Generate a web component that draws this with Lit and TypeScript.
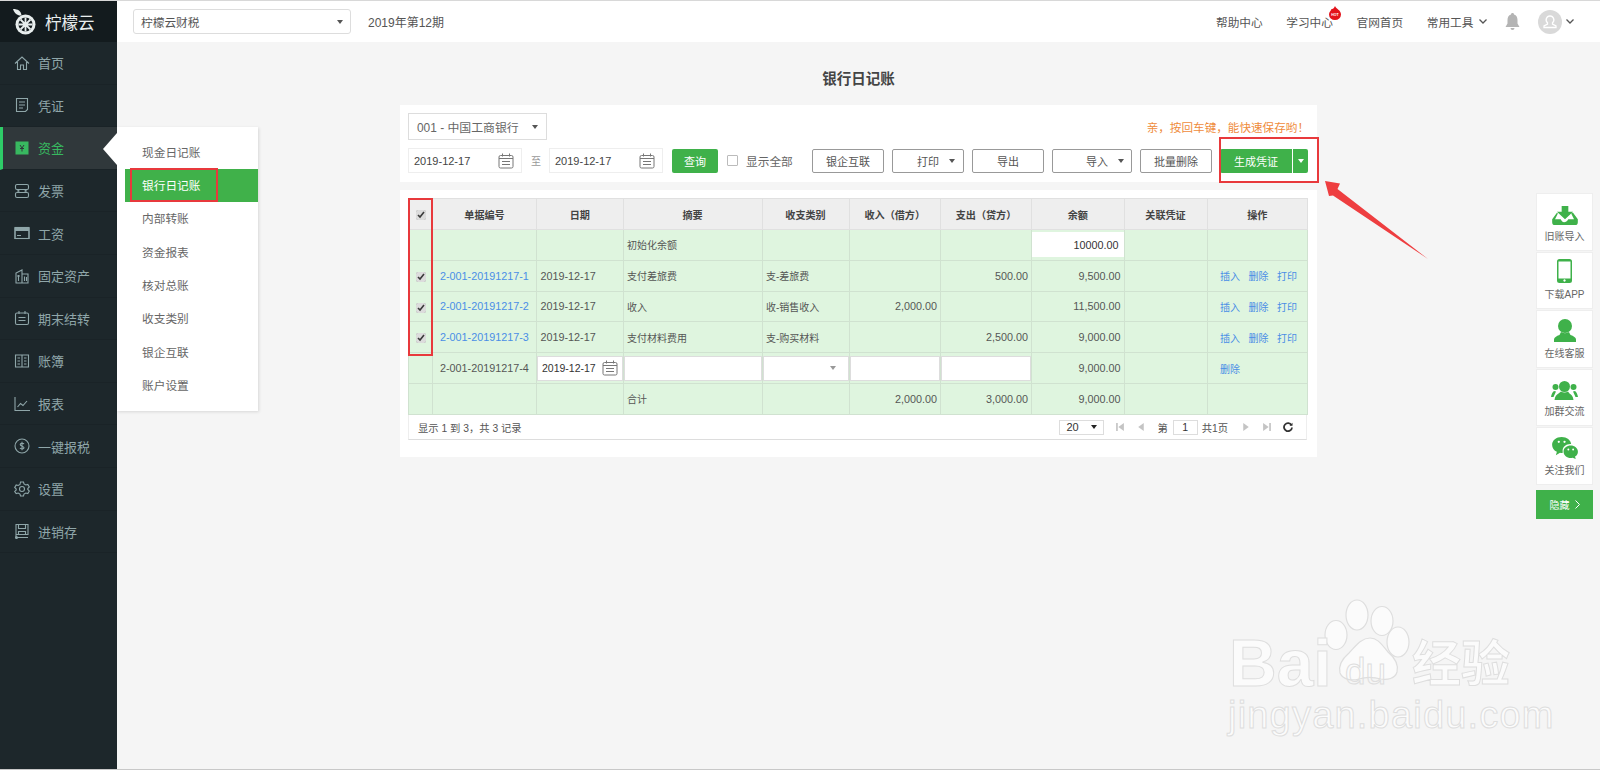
import { LitElement, html, css, svg } from "lit";
import { customElement } from "lit/decorators.js";

const FONT = css`"Liberation Sans", "Noto Sans CJK SC", sans-serif`;

const navIcons: Record<string, unknown> = {
  home: svg`<path d="M1 8.500 8 2l7 6.500M3.500 7v7.500h3V10h3v4.500h3V7"/>`,
  doc: svg`<path d="M2.500 1.500h11v11l-2 2h-9zM5 5h6M5 8h6M5 11h4"/>`,
  money: svg`<rect x="1.500" y="1.500" width="13" height="13" fill="currentColor" stroke="none"/><path d="M6 5l2 3 2-3M8 8v3.500M6 8.500h4" stroke="#30383b" stroke-width="1"/>`,
  invoice: svg`<path d="M3 1.500h10a1.500 1.500 0 0 1 1.500 1.500v2a1.500 1.500 0 0 1-1.500 1.500H3M3 1.500A1.500 1.500 0 0 0 1.500 3v2A1.500 1.500 0 0 0 3 6.500M3 9.500h10a1.500 1.500 0 0 1 1.500 1.500v2a1.500 1.500 0 0 1-1.500 1.500H3A1.500 1.500 0 0 1 1.500 13v-2A1.500 1.500 0 0 1 3 9.500zM3 6.500 5 8 3 9.500M13 6.500 11 8l2 1.500"/>`,
  card: svg`<rect x="1" y="2.500" width="14" height="11" fill="none"/><path d="M.5 2.500h15v3.500H.5z" fill="currentColor" stroke="none"/><path d="M1 6v7.500h14V6M3 10.500h4"/>`,
  asset: svg`<path d="M2 15V5l6-3v13M8 6h6v9H1.500M4.500 7v6M10.500 8.500v4.500M6 8H3M12.500 9v4"/>`,
  period: svg`<rect x="1.500" y="3" width="13" height="11.500" rx="1.500"/><path d="M5 1v3M11 1v3M4.500 7.500h7M4.500 10.500h7"/>`,
  book: svg`<path d="M1.500 2h13v12h-13zM8 2v12M3.500 5H6M3.500 8H6M3.500 11H6M10 5h2.500M10 8h2.500M10 11h2.500"/>`,
  chart: svg`<path d="M1 1v13.500h15M3.500 11l3-3.500 2.500 2 4-4.500"/>`,
  tax: svg`<circle cx="8" cy="8" r="7"/><path d="M10 6c-.5-1-3.800-1.300-3.800.5S10 8 10 9.700c0 1.600-3.400 1.400-4 .3M8 3.800v8.400"/>`,
  gear: svg`<circle cx="8" cy="8" r="2.500"/><path d="M6.500 1h3l.5 2 1.800 1 2-.6 1.500 2.600-1.500 1.500v1l1.500 1.500-1.500 2.600-2-.6-1.800 1-.5 2h-3l-.5-2-1.800-1-2 .6L.7 10.500 2.200 9V8L.7 6.500 2.200 3.900l2 .6L6 3.500z"/>`,
  stock: svg`<path d="M2 1.500h12v10H2zM4.500 1.500v4h7v-4M4.500 11.500v-3h7v3M2 1v13.500h12"/><circle cx="2.500" cy="14.500" r="1"/>`,
};

const NAV = [
  ["home", "首页"], ["doc", "凭证"], ["money", "资金"], ["invoice", "发票"], ["card", "工资"], ["asset", "固定资产"],
  ["period", "期末结转"], ["book", "账簿"], ["chart", "报表"], ["tax", "一键报税"], ["gear", "设置"], ["stock", "进销存"],
];
const SUB = ["现金日记账", "银行日记账", "内部转账", "资金报表", "核对总账", "收支类别", "银企互联", "账户设置"];
const COLS = [24, 104, 86.5, 139, 87, 91.5, 91, 92.5, 83, 100.5];
const HEAD = ["单据编号", "日期", "摘要", "收支类别", "收入（借方）", "支出（贷方）", "余额", "关联凭证", "操作"];

const calendar = html`<svg class="cal" viewBox="0 0 16 16"><rect x="1" y="2.500" width="14" height="12.500" rx="1.500"/><path d="M4.500 .5v3M11.500 .5v3M1 5.500h14M4 8.500h8M4 11.500h8"/></svg>`;

@customElement("app-root")
export class AppRoot extends LitElement {
  static styles = css`
    :host {
      display: flex;
      position: relative;
      width: 1600px;
      height: 770px;
      overflow: hidden;
      background: #f5f5f5;
      font-family: ${FONT};
      color: #555;
      box-sizing: border-box;
      border-top: 1px solid #d8d8d8;
      border-bottom: 1px solid #c8c8c8;
    }
    * { box-sizing: border-box; }
    svg { display: block; flex: none; }

    .side { width: 117px; flex: none; background: #1d272b; }
    .logo { height: 41px; background: #131b1e; display: flex; align-items: center; padding-left: 13px; gap: 9px; color: #e8eeee; font-size: 16.500px; }
    .nav { height: 42.600px; display: flex; align-items: center; padding-left: 14px; gap: 8px; font-size: 13px; color: #8fa6a9; border-bottom: 1px solid #1a2327; }
    .nav svg { width: 16px; height: 16px; fill: none; stroke: currentColor; stroke-width: 1.100; }
    .nav.on { background: #30383b; color: #38b860; border-left: 3px solid #2ecc68; padding-left: 11px; }

    .main { flex: 1; min-width: 0; }
    .top { height: 41px; background: #fff; display: flex; align-items: center; padding-left: 16px; font-size: 11.700px; color: #555; }
    .co { width: 218px; height: 25px; border: 1px solid #ddd; border-radius: 3px; display: flex; align-items: center; justify-content: space-between; padding: 0 7px; }
    .caret { width: 0; height: 0; border: 3.500px solid transparent; border-top: 4px solid #555; border-bottom: 0; flex: none; }
    .period { margin-left: 17px; font-size: 12px; }
    .links { margin-left: auto; display: flex; align-items: center; gap: 23.500px; padding-right: 26px; }
    .links span { position: relative; }
    .links .tool { display: flex; align-items: center; gap: 5px; }
    .chev { width: 8px; height: 5px; fill: none; stroke: #555; stroke-width: 1.300; }
    .hot { position: absolute; right: -8px; top: -7px; width: 12px; height: 14px; }
    .hot text { font: bold 3.500px ${FONT}; fill: #fff; text-anchor: middle; }
    .bell { width: 15px; height: 17px; fill: #b4b4b4; margin-left: -5.500px; }
    .user { display: flex; align-items: center; gap: 4px; margin-left: -5px; }
    .avatar { width: 24px; height: 24px; }

    h1 { margin: 0; padding-top: 11px; height: 63px; line-height: 52px; text-align: center; font-size: 14.500px; color: #444; margin-left: 283px; width: 917px; }
    .card { margin-left: 283px; width: 917px; background: #fff; padding: 8px; }
    .bar { height: 76.500px; margin-bottom: 8.500px; display: flex; flex-direction: column; gap: 8px; }
    .row1 { height: 27px; display: flex; align-items: center; justify-content: space-between; }
    .bank { width: 139px; height: 27px; border: 1px solid #ddd; display: flex; align-items: center; justify-content: space-between; padding: 0 8px; font-size: 11.900px; color: #666; }
    .hint { color: #ef8c3c; font-size: 11.600px; }
    .row2 { height: 25px; display: flex; align-items: center; gap: 8px; font-size: 11px; }
    .date { width: 114px; height: 25px; border: 1px solid #eee; display: flex; align-items: center; justify-content: space-between; padding: 0 7px 0 5px; color: #444; }
    .cal { width: 16px; height: 16px; fill: none; stroke: #777; stroke-width: 1; }
    .to { width: 10px; margin: 0 0 0 1px; color: #999; font-size: 10px; }
    .btn { height: 24px; width: 72px; border: 1px solid #999; border-radius: 2px; background: #fff; display: flex; align-items: center; justify-content: center; color: #555; gap: 10px; padding-left: 16px; }
    .btn.plain { padding-left: 0; }
    .btn.wide { width: 80px; padding-left: 26px; }
    .go { height: 24px; width: 46px; background: #3fb14a; color: #fff; border-radius: 2px; display: flex; align-items: center; justify-content: center; margin-left: 1px; }
    .all { flex: none; width: 65px; display: flex; align-items: center; gap: 8px; font-size: 11.700px; color: #666; margin: 0 12px 0 1px; white-space: nowrap; }
    .box { flex: none; width: 11px; height: 11px; border: 1px solid #bbb; border-radius: 1px; background: #fff; }
    .make { width: 72px; height: 24px; background: #3fb14a; color: #fff; border-radius: 2px 0 0 2px; display: flex; align-items: center; justify-content: center; }
    .more { width: 15px; height: 24px; background: #3fb14a; border-radius: 0 2px 2px 0; margin-left: -7px; display: flex; align-items: center; justify-content: center; }
    .more .caret { border-top-color: #fff; }

    .list { height: 267px; padding-bottom: 17px; }
    table { border-collapse: collapse; table-layout: fixed; width: 899px; font-size: 10.800px; }
    th { height: 31px; background: #eee; border: 1px solid #e0e0e0; font-size: 10.100px; font-weight: bold; color: #444; }
    td { height: 30.800px; background: #dff5df; border: 1px solid #d0e2d0; padding: 0 3.500px; color: #555; white-space: nowrap; }
    td.cn { font-size: 10px; }
    td.num { text-align: right; padding-right: 3px; }
    td.chk, th.chk { text-align: center; padding: 0; }
    td.no { padding-left: 7px; }
    td.fill { padding: 2px 0; }
    a { color: #4a8ee6; text-decoration: none; }
    input[type="checkbox"] { width: 10px; height: 10px; margin: 0; accent-color: #dcdcdc; vertical-align: middle; }
    .ops { display: flex; gap: 8.500px; font-size: 10px; padding-left: 9px; }
    .in { height: 25px; background: #fff; border: 1px solid #ddd; display: flex; align-items: center; justify-content: space-between; padding: 0 4px; color: #333; font-size: 10.500px; }
    .in.bal { border-color: #fff; justify-content: flex-end; color: #333; font-size: 10.800px; }
    .in .caret { border-top-color: #999; margin-right: 8px; }
    .pager { height: 25.500px; width: 899px; background: #fff; border: 1px solid #eee; border-top: 0; border-bottom: 1px solid #ddd; display: flex; align-items: center; padding: 0 13px 0 9px; font-size: 10.300px; color: #555; }
    .pg { margin-left: auto; display: flex; align-items: center; }
    .size { width: 45px; height: 15px; border: 1px solid #ddd; display: flex; align-items: center; justify-content: space-between; padding: 0 6px; color: #333; font-size: 11px; }
    .size .caret { border-top-color: #222; }
    .pi { width: 10px; height: 10px; fill: #c4c4c4; }
    .page { width: 25px; height: 15px; border: 1px solid #ddd; text-align: center; line-height: 13px; margin: 0 4px 0 5px; color: #333; font-size: 10.500px; }
    .first { margin-left: 11px; } .prev { margin-left: 11px; } .no-lbl { margin-left: 11px; }
    .next { margin-left: 13px; } .last { margin-left: 11px; } .re { margin-left: 11px; }
    .re { width: 10px; height: 10px; fill: none; stroke: #333; stroke-width: 1.800; }

    .sub { position: absolute; left: 117px; top: 126px; width: 141px; height: 284px; background: #fff; box-shadow: 1px 1px 3px rgba(0,0,0,.12); padding: 8.500px 0 8px; font-size: 11.700px; color: #666; }
    .sub div { height: 33.400px; line-height: 33.400px; padding-left: 25px; }
    .sub .act { margin-left: 8px; padding-left: 17px; background: #40b14a; color: #fff; }
    .sub::before { content: ""; position: absolute; left: -14px; top: 6px; border: 16.500px solid transparent; border-left: 0; border-right: 14px solid #fff; }

    .mark { position: absolute; border: 2px solid #e8393c; pointer-events: none; }
    .m-sub { left: 130px; top: 167px; width: 88px; height: 34px; }
    .m-chk { left: 408px; top: 197px; width: 25px; height: 158px; }
    .m-make { left: 1219px; top: 136px; width: 100px; height: 46px; }
    .arrow { position: absolute; left: 1320px; top: 175px; width: 115px; height: 90px; fill: #ee3e40; }

    .dock { position: absolute; left: 1536px; top: 192px; width: 57px; display: flex; flex-direction: column; gap: 1px; font-size: 10px; color: #666; }
    .dock > div { height: 57.500px; background: #fff; border: 1px solid #eee; display: flex; flex-direction: column; align-items: center; justify-content: flex-end; padding-bottom: 7px; gap: 3px; }
    .dock svg { fill: #3fb14a; }
    .i-tray { width: 26px; height: 19px; }
    .i-phone { width: 15px; height: 24px; }
    .i-man { width: 22px; height: 23px; }
    .i-group { width: 27px; height: 19px; }
    .i-chat { width: 26px; height: 22px; }
    .dock .hide { height: 29px; margin-top: 4px; background: #3fb14a; border: 0; color: #fff; flex-direction: row; justify-content: center; align-items: center; padding: 0; gap: 5px; }
    .i-hide { width: 5px; height: 9px; }

    .wm { position: absolute; left: 1220px; top: 590px; width: 310px; height: 150px; pointer-events: none; color: #fbfbfb; -webkit-text-stroke: 1px #dedede; }
    .wm svg { position: absolute; left: 95px; top: 0; width: 110px; height: 100px; }
    .wm span { position: absolute; white-space: nowrap; line-height: 1; }
    .wm .bai { left: 9px; top: 39px; font-size: 66px; font-weight: bold; }
    .wm .jy { left: 192px; top: 49px; font-size: 49px; font-weight: bold; }
    .wm .url { left: 8px; top: 105px; font-size: 38px; letter-spacing: 1.200px; }
    .wm .du { left: 125px; top: 62px; font-size: 37px; color: transparent; }
  `;

  private renderRow(no: string, linked: boolean, date: string, memo: string, kind: string, inc: string, out: string, bal: string) {
    return html`<tr>
      <td class="chk"><input type="checkbox" checked /></td>
      <td class="no">${linked ? html`<a>${no}</a>` : no}</td>
      <td>${date}</td><td class="cn">${memo}</td><td class="cn">${kind}</td>
      <td class="num">${inc}</td><td class="num">${out}</td><td class="num">${bal}</td><td></td>
      <td><div class="ops"><a>插入</a><a>删除</a><a>打印</a></div></td>
    </tr>`;
  }

  render() {
    return html`
      <aside class="side">
        <div class="logo">
          <svg width="23" height="26" viewBox="0 0 23 26">
            <path d="M0 0c5 0 8 2 8.500 6.500C4.500 7 1.500 4.500 0 0z" fill="#e8eeee"/>
            <circle cx="12.500" cy="15.500" r="10" fill="#e8eeee"/>
            <circle cx="12.500" cy="15.500" r="7" fill="#131b1e"/>
            <path d="M12.500 8.500v14M5.500 15.500h14M7.500 10.500l10 10M17.500 10.500l-10 10" stroke="#e8eeee" stroke-width="1.800"/>
          </svg>
          柠檬云
        </div>
        ${NAV.map(([icon, label]) => html`<div class="nav ${label === "资金" ? "on" : ""}"><svg viewBox="0 0 16 16">${navIcons[icon]}</svg>${label}</div>`)}
      </aside>

      <div class="main">
        <header class="top">
          <div class="co">柠檬云财税<i class="caret"></i></div>
          <div class="period">2019年第12期</div>
          <div class="links">
            <span>帮助中心</span>
            <span>学习中心<svg class="hot" viewBox="0 0 12 14"><path d="M6 0c1 3 6 4 6 8.500A6 5.500 0 0 1 0 8.500C0 6 2 5 2.500 3 4 3.500 5 2 6 0z" fill="#e3131b"/><text x="6" y="10">HOT</text></svg></span>
            <span>官网首页</span>
            <span class="tool">常用工具<svg class="chev" viewBox="0 0 8 5"><path d="M.5.5 4 4 7.500.5"/></svg></span>
            <svg class="bell" viewBox="0 0 15 17"><path d="M7.500 0C8.500 0 9 .7 9 1.500 11.500 2.300 12.500 4.500 12.500 7v3.500L14.500 14H.5l2-3.500V7C2.500 4.500 3.500 2.300 6 1.500 6 .7 6.500 0 7.500 0zM5.500 15h4a2 2 0 0 1-4 0z"/></svg>
            <div class="user">
              <svg class="avatar" viewBox="0 0 24 24"><circle cx="12" cy="12" r="12" fill="#d9d9d9"/><path d="M12 6a3.800 3.800 0 0 1 2.500 6.700V14l3.500 2v1.500H6V16l3.500-2v-1.300A3.800 3.800 0 0 1 12 6z" fill="none" stroke="#fff" stroke-width="1.300"/></svg>
              <svg class="chev" viewBox="0 0 8 5"><path d="M.5.5 4 4 7.500.5"/></svg>
            </div>
          </div>
        </header>

        <h1>银行日记账</h1>

        <section class="card bar">
          <div class="row1">
            <div class="bank">001 - 中国工商银行<i class="caret"></i></div>
            <div class="hint">亲，按回车键，能快速保存哟！</div>
          </div>
          <div class="row2">
            <div class="date">2019-12-17${calendar}</div>
            <span class="to">至</span>
            <div class="date">2019-12-17${calendar}</div>
            <div class="go">查询</div>
            <label class="all"><i class="box"></i>显示全部</label>
            <div class="btn plain">银企互联</div>
            <div class="btn">打印<i class="caret"></i></div>
            <div class="btn plain">导出</div>
            <div class="btn wide">导入<i class="caret"></i></div>
            <div class="btn plain">批量删除</div>
            <div class="make">生成凭证</div>
            <div class="more"><i class="caret"></i></div>
          </div>
        </section>

        <section class="card list">
          <table>
            <colgroup>${COLS.map((w) => html`<col style="width:${w}px" />`)}</colgroup>
            <thead><tr><th class="chk"><input type="checkbox" checked /></th>${HEAD.map((h) => html`<th>${h}</th>`)}</tr></thead>
            <tbody>
              <tr>
                <td></td><td></td><td></td><td class="cn">初始化余额</td><td></td><td></td><td></td>
                <td class="fill"><div class="in bal">10000.00</div></td><td></td><td></td>
              </tr>
              ${this.renderRow("2-001-20191217-1", true, "2019-12-17", "支付差旅费", "支-差旅费", "", "500.00", "9,500.00")}
              ${this.renderRow("2-001-20191217-2", true, "2019-12-17", "收入", "收-销售收入", "2,000.00", "", "11,500.00")}
              ${this.renderRow("2-001-20191217-3", true, "2019-12-17", "支付材料费用", "支-购买材料", "", "2,500.00", "9,000.00")}
              <tr>
                <td></td><td class="no">2-001-20191217-4</td>
                <td class="fill"><div class="in">2019-12-17${calendar}</div></td>
                <td class="fill"><div class="in"></div></td>
                <td class="fill"><div class="in"><span></span><i class="caret"></i></div></td>
                <td class="fill"><div class="in"></div></td>
                <td class="fill"><div class="in"></div></td>
                <td class="num">9,000.00</td><td></td>
                <td><div class="ops"><a>删除</a></div></td>
              </tr>
              <tr>
                <td></td><td></td><td></td><td class="cn">合计</td><td></td>
                <td class="num">2,000.00</td><td class="num">3,000.00</td><td class="num">9,000.00</td><td></td><td></td>
              </tr>
            </tbody>
          </table>
          <div class="pager">
            <span>显示 1 到 3，共 3 记录</span>
            <div class="pg">
              <div class="size">20<i class="caret"></i></div>
              <svg class="pi first" viewBox="0 0 9 9"><path d="M1 1h1.500v7H1zM8 1v7L3 4.500z"/></svg>
              <svg class="pi prev" viewBox="0 0 9 9"><path d="M7 1v7L2 4.500z"/></svg>
              <span class="no-lbl">第</span>
              <div class="page">1</div>
              <span>共1页</span>
              <svg class="pi next" viewBox="0 0 9 9"><path d="M2 1v7l5-3.500z"/></svg>
              <svg class="pi last" viewBox="0 0 9 9"><path d="M1 1v7l5-3.500zM6.500 1H8v7H6.500z"/></svg>
              <svg class="re" viewBox="0 0 10 10"><path d="M8.500 3.200A4 4 0 1 0 9 5.500"/><path d="M9.500.8v3h-3" fill="#333" stroke="none"/></svg>
            </div>
          </div>
        </section>
      </div>

      <nav class="sub">
        ${SUB.map((s) => html`<div class="${s === "银行日记账" ? "act" : ""}">${s}</div>`)}
      </nav>

      <div class="mark m-sub"></div>
      <div class="mark m-chk"></div>
      <div class="mark m-make"></div>
      <svg class="arrow" viewBox="0 0 115 90"><path d="M5 5 20 7.500 17.500 13 108 83 13 19.500 9 20z"/></svg>

      <div class="dock">
        <div><svg class="i-tray" viewBox="0 0 27 20"><path d="M10 0h7v6h5l-8.500 8L5 6h5z"/><path d="M5 7 0 14v3a3 3 0 0 0 3 3h21a3 3 0 0 0 3-3v-3l-5-7h-1l-1 1 3 6h-6c-1 2-3 3-4.500 3S10 16 9 14H3l3-6z"/></svg>旧账导入</div>
        <div><svg class="i-phone" viewBox="0 0 15 24"><path fill-rule="evenodd" d="M2.500 0h10A2.500 2.500 0 0 1 15 2.500v19a2.500 2.500 0 0 1-2.500 2.500h-10A2.500 2.500 0 0 1 0 21.500v-19A2.500 2.500 0 0 1 2.500 0zM1.500 2.500v17h12v-17zM7.500 20.300a1.200 1.200 0 1 0 .01 0z"/></svg>下载APP</div>
        <div><svg class="i-man" viewBox="0 0 22 23"><circle cx="11" cy="7" r="7"/><path d="M7 13c2.500 1.500 5.500 1.500 8 0l1.500 3c3 1 5.500 2.500 5.500 4.500V23H0v-2.500C0 18.500 2.500 17 5.500 16z"/></svg>在线客服</div>
        <div><svg class="i-group" viewBox="0 0 27 19"><circle cx="13.500" cy="5.500" r="5.500"/><path d="M10 10.500c2 1.200 5 1.200 7 0l1.500 2c2 1 3.500 2.500 4 6.500H3.500c.5-4 2-5.500 4-6.500z"/><circle cx="4.500" cy="6" r="3"/><circle cx="22.500" cy="6" r="3"/><path d="M3 10l2 .5-2.500 5.500H0c.3-2.500 1.500-5 3-6zM24 10l-2 .5 2.500 5.500H27c-.3-2.500-1.500-5-3-6z"/></svg>加群交流</div>
        <div><svg class="i-chat" viewBox="0 0 27 23"><path d="M10 0c5.500 0 9.500 3.300 10 7.500-4.500-.5-9 2.500-9 7 0 .8.100 1.300.3 2-1 .2-2 .1-3-.1L4 19l1-3.500C2 14 0 11.200 0 8c0-4.500 4.500-8 10-8z"/><path d="M19.500 9c4 0 7.500 2.800 7.500 6.300 0 2.200-1 3.800-3 5.200l.7 2.500-3.200-1.400c-.8.200-1.500.3-2 .3-4 0-7.500-2.900-7.500-6.600S15.500 9 19.500 9z"/><circle cx="7" cy="5" r="1.200" fill="#fff"/><circle cx="13" cy="5" r="1.200" fill="#fff"/><circle cx="17" cy="13" r="1" fill="#fff"/><circle cx="22" cy="13" r="1" fill="#fff"/></svg>关注我们</div>
        <div class="hide">隐藏 <svg class="i-hide" viewBox="0 0 5 9"><path d="M.5.5l4 4-4 4" fill="none" stroke="#fff"/></svg></div>
      </div>

      <div class="wm">
        <svg viewBox="0 0 110 100" fill="#fbfbfb" stroke="#dedede" stroke-width="1.200">
          <ellipse cx="42" cy="24" rx="11" ry="15"/>
          <ellipse cx="67" cy="30" rx="11" ry="14.500"/>
          <ellipse cx="21" cy="44" rx="11" ry="14.500"/>
          <ellipse cx="83" cy="51" rx="11" ry="15"/>
          <path d="M55 47c8 0 12 7 18 14 7 6 11 12 9 20-2 7-10 8-16 7-7-2-16-2-22 0-7 2-16 1-19-6-2-8 2-14 9-20 6-6 12-15 21-15z"/>
        </svg>
        <span class="bai">Bai</span>
        <span class="du">du</span>
        <span class="jy">经验</span>
        <span class="url">jingyan.baidu.com</span>
      </div>
    `;
  }
}
